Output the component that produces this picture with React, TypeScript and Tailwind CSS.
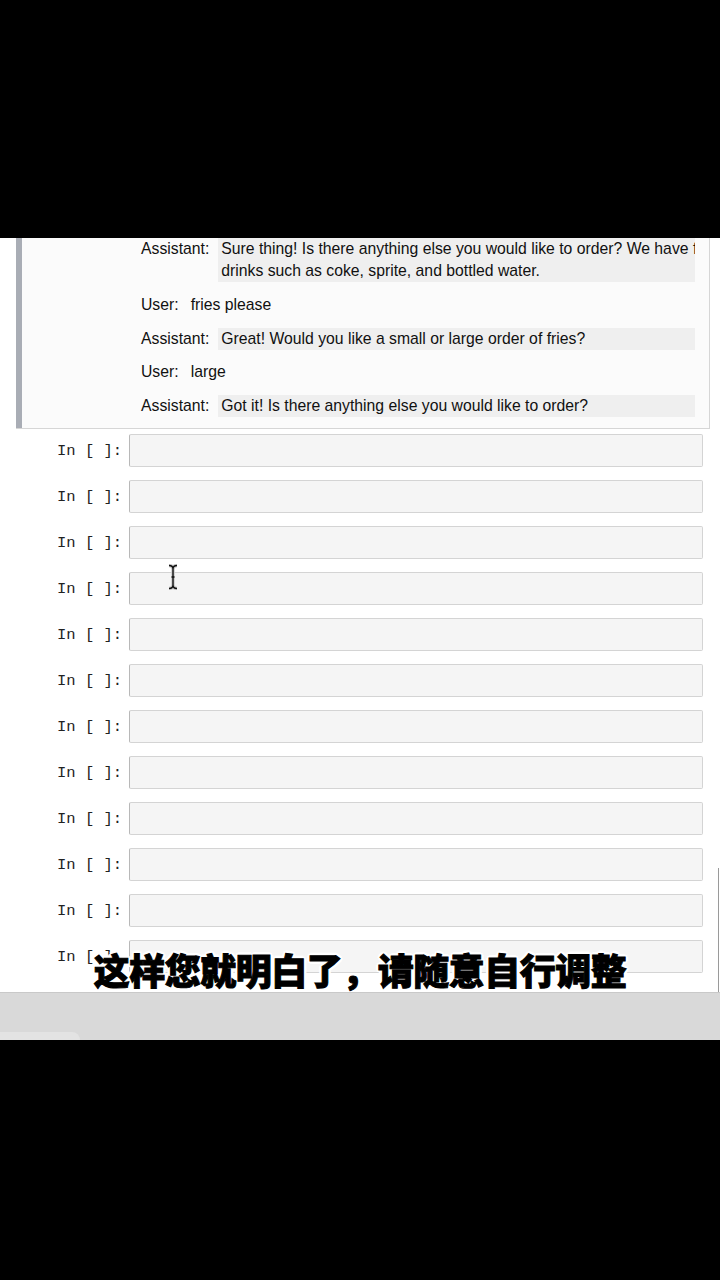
import React from 'react';

const messages: { role: string; lines: string[]; shaded: boolean }[] = [
  {
    role: 'Assistant:',
    lines: [
      'Sure thing! Is there anything else you would like to order? We have fountain',
      'drinks such as coke, sprite, and bottled water.',
    ],
    shaded: true,
  },
  { role: 'User:', lines: ['fries please'], shaded: false },
  { role: 'Assistant:', lines: ['Great! Would you like a small or large order of fries?'], shaded: true },
  { role: 'User:', lines: ['large'], shaded: false },
  { role: 'Assistant:', lines: ['Got it! Is there anything else you would like to order?'], shaded: true },
];

const sans = "font-['Liberation_Sans','Helvetica',Arial,sans-serif]";

const Cursor = () => (
  <svg width="12" height="26" viewBox="0 0 12 26" className="absolute left-[167px] top-[326px]">
    <path d="M2 1.5 Q6 1.5 6 5 Q6 1.5 10 1.5 M6 5 V21 M2 24.5 Q6 24.5 6 21 Q6 24.5 10 24.5 M4.5 13 H7.5" stroke="#ccc" strokeWidth="3.5" fill="none" />
    <path d="M2 1.5 Q6 1.5 6 5 Q6 1.5 10 1.5 M6 5 V21 M2 24.5 Q6 24.5 6 21 Q6 24.5 10 24.5 M4.5 13 H7.5" stroke="#111" strokeWidth="1.4" fill="none" />
  </svg>
);

export default function App() {
  return (
    <div className="w-[720px] h-[1280px] bg-black flex flex-col">
      <div className="h-[238px] shrink-0" />

      <div className="relative h-[754px] shrink-0 bg-white overflow-hidden">
        {/* output cell */}
        <div className="ml-[16px] w-[694px] flex border-b border-r border-[#d6d6d6]">
          <div className="w-[6px] shrink-0 bg-[#a9adb5]" />
          <div className={`flex-1 bg-[#fbfbfb] pl-[119px] pb-[11px] flex flex-col gap-[11.75px] ${sans} text-[15.75px] text-[#111]`}>
            {messages.map((m, i) => (
              <div key={i} className="flex">
                <div className="shrink-0 leading-[22px] whitespace-nowrap">{m.role}</div>
                {m.shaded ? (
                  <div className="ml-[9px] w-[477px] overflow-hidden bg-[#efefef]">
                    {m.lines.map((l, j) => (
                      <div key={j} className="pl-[3px] whitespace-nowrap leading-[22px]">
                        {l}
                      </div>
                    ))}
                  </div>
                ) : (
                  <div className="ml-[12px] leading-[22px]">{m.lines[0]}</div>
                )}
              </div>
            ))}
          </div>
        </div>

        {/* empty input cells */}
        <div className="mt-[5px] flex flex-col gap-[13px]">
          {Array.from({ length: 12 }).map((_, i) => (
            <div key={i} className="flex items-center">
              <div className="w-[129px] shrink-0 pl-[57px] pt-[3px] font-['Liberation_Mono',monospace] text-[15.5px] text-[#222] whitespace-pre">
                In [ ]:
              </div>
              <div className="w-[574px] h-[33px] bg-[#f5f5f5] border border-[#d4d4d4] border-l-[#b8b8b8] rounded-[2px]" />
            </div>
          ))}
        </div>

        <Cursor />

        {/* scrollbar edge */}
        <div className="absolute right-[1px] top-[630px] bottom-0 w-px bg-[#9a9a9a]" />

        {/* subtitle */}
        <div className="absolute left-0 right-0 top-[707px] text-center font-['Noto_Sans_CJK_SC',sans-serif] font-black text-[36px] leading-[48px] tracking-[-0.5px] text-black [-webkit-text-stroke:1px_black] [text-shadow:3px_0_0_#fff,-3px_0_0_#fff,0_3px_0_#fff,0_-3px_0_#fff,2px_2px_0_#fff,-2px_-2px_0_#fff,2px_-2px_0_#fff,-2px_2px_0_#fff]">
          这样您就明白了，请随意自行调整
        </div>
      </div>

      <div className="h-[48px] shrink-0 bg-[#d9d9d9] border-t border-[#c9c9c9] flex flex-col justify-end">
        <div className="h-[8px] w-[80px] bg-[#e3e3e3] rounded-tr-[20px]" />
      </div>

      <div className="flex-1" />
    </div>
  );
}
